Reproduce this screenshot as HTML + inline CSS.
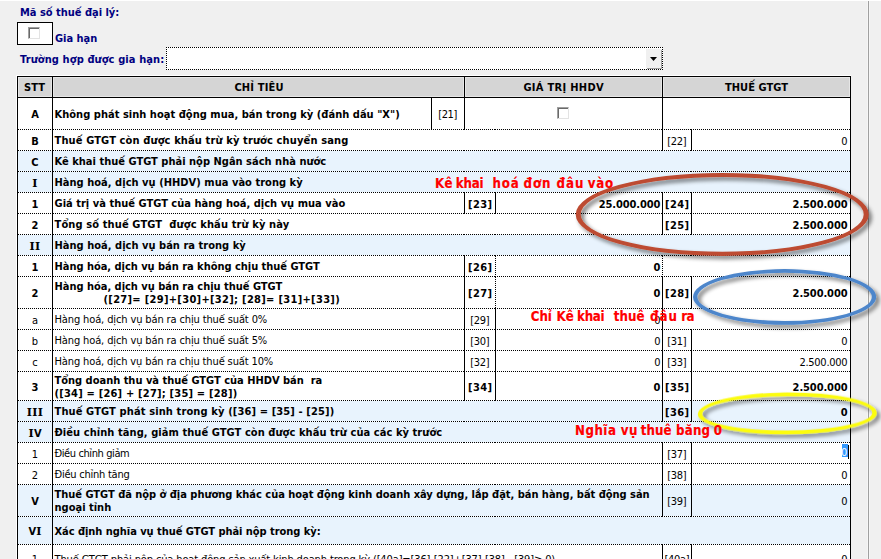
<!DOCTYPE html>
<html lang="vi">
<head>
<meta charset="utf-8">
<title>Tờ khai thuế GTGT</title>
<style>
html,body{margin:0;padding:0}
body{width:881px;height:559px;overflow:hidden;background:#f0f0f0;position:relative;font-family:"DejaVu Sans Condensed","DejaVu Sans","Liberation Sans",sans-serif;font-stretch:condensed;font-size:11px;color:#000}
.r{position:absolute}
.t{position:absolute;white-space:nowrap;line-height:13px}
.b{font-weight:bold}
.nv{color:#000080}
.red{position:absolute;left:0;width:881px;height:16px;white-space:nowrap;color:#ff0000;font-weight:bold;font-size:13.2px;line-height:16px;-webkit-text-stroke:0.15px #ff0000}
.red span{position:absolute;top:0}
.hl{position:absolute;height:1px;background:repeating-linear-gradient(90deg,#000 0,#000 1px,transparent 1px,transparent 2px)}
.vl{position:absolute;width:1px;background:#000}
.vd{position:absolute;width:1px;background:repeating-linear-gradient(180deg,#000 0,#000 1px,transparent 1px,transparent 2px)}
.cb{position:absolute;width:10px;height:10px;background:#fff;border-top:1px solid #a0a0a0;border-left:1px solid #a0a0a0;border-right:1px solid #e3e3e3;border-bottom:1px solid #e3e3e3;box-shadow:inset 1px 1px 0 #696969}
.m{font-family:"DejaVu Serif","Liberation Serif",serif;font-stretch:normal;letter-spacing:0.3px}
svg{position:absolute;left:0;top:0}
</style>
</head>
<body>

<div class="r" style="left:0px;top:0px;width:881px;height:1px;background:#fff;"></div>
<div class="r" style="left:867px;top:1px;width:3px;height:558px;background:#f6f6f6;"></div>
<div class="r" style="left:868px;top:1px;width:1px;height:558px;background:#a0a0a0;"></div>
<div class="t b nv" style="letter-spacing:-0.017px;left:20px;top:6px">Mã số thuế đại lý:</div>
<div class="r" style="left:17px;top:22px;width:36px;height:23px;background:#fff;box-sizing:border-box;border:1px solid #000"></div>
<div class="cb" style="left:28px;top:27px"></div>
<div class="t b nv" style="letter-spacing:-0.034px;left:55px;top:32px">Gia hạn</div>
<div class="t b nv" style="letter-spacing:0.105px;left:20px;top:53px">Trường hợp được gia hạn:</div>
<div class="r" style="left:166px;top:47px;width:497px;height:23px;background:#fff;"></div>
<div class="hl" style="left:166px;top:47px;width:497px"></div>
<div class="hl" style="left:166px;top:69px;width:497px"></div>
<div class="vd" style="left:166px;top:47px;height:23px"></div>
<div class="vd" style="left:662px;top:47px;height:23px"></div>
<div class="r" style="left:646px;top:49px;width:15px;height:19px;background:#f0f0f0;box-shadow:1px 1px 0 #a0a0a0"></div>
<svg width="881" height="559" style="pointer-events:none"><polygon points="650,57 657,57 653.5,61" fill="#000"/></svg>
<div class="r" style="left:16px;top:75px;width:835px;height:484px;background:#fff;"></div>
<div class="r" style="left:17px;top:76px;width:834px;height:483px;background:#000;"></div>
<div class="r" style="left:18px;top:77px;width:832px;height:482px;background:#fff;"></div>
<div class="r" style="left:18px;top:77px;width:832px;height:20px;background:#d5d5d5;"></div>
<div class="r" style="left:18px;top:77px;width:34px;height:20px;background:#d5d5d5;box-shadow:inset 0 0 0 1px #e6e6e6"></div>
<div class="r" style="left:53px;top:77px;width:411px;height:20px;background:#d5d5d5;box-shadow:inset 0 0 0 1px #e6e6e6"></div>
<div class="r" style="left:465px;top:77px;width:197px;height:20px;background:#d5d5d5;box-shadow:inset 0 0 0 1px #e6e6e6"></div>
<div class="r" style="left:663px;top:77px;width:187px;height:20px;background:#d5d5d5;box-shadow:inset 0 0 0 1px #e6e6e6"></div>
<div class="r" style="left:18px;top:97px;width:832px;height:1px;background:#000;"></div>
<div class="vl" style="left:464px;top:77px;height:20px"></div>
<div class="vl" style="left:662px;top:77px;height:20px"></div>
<div class="t b" style="letter-spacing:0.155px;left:34.58px;transform:translateX(-50%);top:81px">STT</div>
<div class="t b" style="letter-spacing:0.185px;left:259.09px;transform:translateX(-50%);top:81px">CHỈ TIÊU</div>
<div class="t b" style="letter-spacing:0.305px;left:563.65px;transform:translateX(-50%);top:81px">GIÁ TRỊ HHDV</div>
<div class="t b" style="letter-spacing:0.070px;left:756.53px;transform:translateX(-50%);top:81px">THUẾ GTGT</div>
<div class="t b" style="letter-spacing:0.070px;left:35.03px;transform:translateX(-50%);top:108px">A</div>
<div class="t b" style="letter-spacing:0.029px;left:54.5px;top:108px">Không phát sinh hoạt động mua, bán trong kỳ (đánh dấu "X")</div>
<div class="vl" style="left:431px;top:98px;height:31px"></div>
<div class="vl" style="left:464px;top:98px;height:31px"></div>
<div class="vl" style="left:662px;top:98px;height:31px"></div>
<div class="t" style="letter-spacing:-0.343px;left:447.63px;transform:translateX(-50%);top:108px">[21]</div>
<div class="cb" style="left:557px;top:107px"></div>
<div class="hl" style="left:18px;top:129px;width:34px"></div>
<div class="hl" style="left:53px;top:129px;width:411px"></div>
<div class="hl" style="left:464px;top:129px;width:31px"></div>
<div class="hl" style="left:495px;top:129px;width:167px"></div>
<div class="hl" style="left:662px;top:129px;width:29px"></div>
<div class="hl" style="left:691px;top:129px;width:159px"></div>
<div class="t b" style="letter-spacing:0.070px;left:35.03px;transform:translateX(-50%);top:135px">B</div>
<div class="t b" style="letter-spacing:0.129px;left:54.5px;top:134px">Thuế GTGT còn được khấu trừ kỳ trước chuyển sang</div>
<div class="vl" style="left:662px;top:130px;height:20px"></div>
<div class="vl" style="left:691px;top:130px;height:20px"></div>
<div class="t" style="letter-spacing:-0.343px;left:676.83px;transform:translateX(-50%);top:135px">[22]</div>
<div class="t" style="letter-spacing:-0.343px;right:33.74px;top:135px">0</div>
<div class="hl" style="left:18px;top:150px;width:34px"></div>
<div class="hl" style="left:53px;top:150px;width:411px"></div>
<div class="hl" style="left:464px;top:150px;width:31px"></div>
<div class="hl" style="left:495px;top:150px;width:167px"></div>
<div class="hl" style="left:662px;top:150px;width:29px"></div>
<div class="hl" style="left:691px;top:150px;width:159px"></div>
<div class="r" style="left:18px;top:151px;width:832px;height:20px;background:#e8f3fd;"></div>
<div class="t b" style="letter-spacing:0.070px;left:35.03px;transform:translateX(-50%);top:156px">C</div>
<div class="t b" style="letter-spacing:0.016px;left:54.5px;top:155px">Kê khai thuế GTGT phải nộp Ngân sách nhà nước</div>
<div class="hl" style="left:18px;top:171px;width:34px"></div>
<div class="hl" style="left:53px;top:171px;width:411px"></div>
<div class="hl" style="left:464px;top:171px;width:31px"></div>
<div class="hl" style="left:495px;top:171px;width:167px"></div>
<div class="hl" style="left:662px;top:171px;width:29px"></div>
<div class="hl" style="left:691px;top:171px;width:159px"></div>
<div class="r" style="left:18px;top:172px;width:832px;height:20px;background:#e8f3fd;"></div>
<div class="t b" style="letter-spacing:0.070px;left:35.03px;transform:translateX(-50%);top:177px"><span class="m">I</span></div>
<div class="t b" style="letter-spacing:0.034px;left:54.5px;top:176px">Hàng hoá, dịch vụ (HHDV) mua vào trong kỳ</div>
<div class="hl" style="left:18px;top:192px;width:34px"></div>
<div class="hl" style="left:53px;top:192px;width:411px"></div>
<div class="hl" style="left:464px;top:192px;width:31px"></div>
<div class="hl" style="left:495px;top:192px;width:167px"></div>
<div class="hl" style="left:662px;top:192px;width:29px"></div>
<div class="hl" style="left:691px;top:192px;width:159px"></div>
<div class="t b" style="letter-spacing:0.070px;left:35.03px;transform:translateX(-50%);top:198px">1</div>
<div class="t b" style="letter-spacing:0.021px;left:54.5px;top:197px">Giá trị và thuế GTGT của hàng hoá, dịch vụ mua vào</div>
<div class="vl" style="left:464px;top:193px;height:20px"></div>
<div class="vl" style="left:495px;top:193px;height:20px"></div>
<div class="t b" style="letter-spacing:0.374px;left:480.19px;transform:translateX(-50%);top:198px">[23]</div>
<div class="t b" style="letter-spacing:-0.090px;right:220.59px;top:198px">25.000.000</div>
<div class="vl" style="left:662px;top:193px;height:20px"></div>
<div class="vl" style="left:662px;top:193px;height:20px"></div>
<div class="vl" style="left:691px;top:193px;height:20px"></div>
<div class="t b" style="letter-spacing:0.374px;left:677.19px;transform:translateX(-50%);top:198px">[24]</div>
<div class="t b" style="letter-spacing:-0.092px;right:33.49px;top:198px">2.500.000</div>
<div class="hl" style="left:18px;top:213px;width:34px"></div>
<div class="hl" style="left:53px;top:213px;width:411px"></div>
<div class="hl" style="left:464px;top:213px;width:31px"></div>
<div class="hl" style="left:495px;top:213px;width:167px"></div>
<div class="hl" style="left:662px;top:213px;width:29px"></div>
<div class="hl" style="left:691px;top:213px;width:159px"></div>
<div class="t b" style="letter-spacing:0.070px;left:35.03px;transform:translateX(-50%);top:219px">2</div>
<div class="t b" style="letter-spacing:0.125px;left:54.5px;top:218px">Tổng số thuế GTGT&nbsp; được khấu trừ kỳ này</div>
<div class="vl" style="left:662px;top:214px;height:20px"></div>
<div class="vl" style="left:691px;top:214px;height:20px"></div>
<div class="t b" style="letter-spacing:0.374px;left:677.19px;transform:translateX(-50%);top:219px">[25]</div>
<div class="t b" style="letter-spacing:-0.092px;right:33.49px;top:219px">2.500.000</div>
<div class="hl" style="left:18px;top:234px;width:34px"></div>
<div class="hl" style="left:53px;top:234px;width:411px"></div>
<div class="hl" style="left:464px;top:234px;width:31px"></div>
<div class="hl" style="left:495px;top:234px;width:167px"></div>
<div class="hl" style="left:662px;top:234px;width:29px"></div>
<div class="hl" style="left:691px;top:234px;width:159px"></div>
<div class="r" style="left:18px;top:235px;width:832px;height:20px;background:#e8f3fd;"></div>
<div class="t b" style="letter-spacing:0.070px;left:35.03px;transform:translateX(-50%);top:240px"><span class="m">II</span></div>
<div class="t b" style="letter-spacing:0.028px;left:54.5px;top:239px">Hàng hoá, dịch vụ bán ra trong kỳ</div>
<div class="hl" style="left:18px;top:255px;width:34px"></div>
<div class="hl" style="left:53px;top:255px;width:411px"></div>
<div class="hl" style="left:464px;top:255px;width:31px"></div>
<div class="hl" style="left:495px;top:255px;width:167px"></div>
<div class="hl" style="left:662px;top:255px;width:29px"></div>
<div class="hl" style="left:691px;top:255px;width:159px"></div>
<div class="t b" style="letter-spacing:0.070px;left:35.03px;transform:translateX(-50%);top:261px">1</div>
<div class="t b" style="letter-spacing:-0.028px;left:54.5px;top:260px">Hàng hóa, dịch vụ bán ra không chịu thuế GTGT</div>
<div class="vl" style="left:464px;top:256px;height:20px"></div>
<div class="vd" style="left:495px;top:256px;height:20px"></div>
<div class="t b" style="letter-spacing:0.374px;left:480.19px;transform:translateX(-50%);top:261px">[26]</div>
<div class="t b" style="letter-spacing:0.070px;right:220.43px;top:261px">0</div>
<div class="vd" style="left:662px;top:256px;height:20px"></div>
<div class="hl" style="left:18px;top:276px;width:34px"></div>
<div class="hl" style="left:53px;top:276px;width:411px"></div>
<div class="hl" style="left:464px;top:276px;width:31px"></div>
<div class="hl" style="left:495px;top:276px;width:167px"></div>
<div class="hl" style="left:662px;top:276px;width:29px"></div>
<div class="hl" style="left:691px;top:276px;width:159px"></div>
<div class="t b" style="letter-spacing:0.070px;left:35.03px;transform:translateX(-50%);top:287px">2</div>
<div class="t b" style="letter-spacing:-0.019px;left:54.5px;top:280px">Hàng hóa, dịch vụ bán ra chịu thuế GTGT</div>
<div class="t b" style="letter-spacing:0.307px;left:103.5px;top:293px">([27]= [29]+[30]+[32]; [28]= [31]+[33])</div>
<div class="vl" style="left:464px;top:277px;height:31px"></div>
<div class="vd" style="left:495px;top:277px;height:31px"></div>
<div class="t b" style="letter-spacing:0.374px;left:480.19px;transform:translateX(-50%);top:287px">[27]</div>
<div class="t b" style="letter-spacing:0.070px;right:220.43px;top:287px">0</div>
<div class="vl" style="left:662px;top:277px;height:31px"></div>
<div class="vl" style="left:662px;top:277px;height:31px"></div>
<div class="vl" style="left:691px;top:277px;height:31px"></div>
<div class="t b" style="letter-spacing:0.374px;left:677.19px;transform:translateX(-50%);top:287px">[28]</div>
<div class="t b" style="letter-spacing:-0.092px;right:33.49px;top:287px">2.500.000</div>
<div class="hl" style="left:18px;top:308px;width:34px"></div>
<div class="hl" style="left:53px;top:308px;width:411px"></div>
<div class="hl" style="left:464px;top:308px;width:31px"></div>
<div class="hl" style="left:495px;top:308px;width:167px"></div>
<div class="hl" style="left:662px;top:308px;width:29px"></div>
<div class="hl" style="left:691px;top:308px;width:159px"></div>
<div class="t" style="letter-spacing:-0.343px;left:34.83px;transform:translateX(-50%);top:314px">a</div>
<div class="t" style="letter-spacing:-0.125px;left:54.5px;top:313px">Hàng hoá, dịch vụ bán ra chịu thuế suất 0%</div>
<div class="vl" style="left:464px;top:309px;height:20px"></div>
<div class="vl" style="left:495px;top:309px;height:20px"></div>
<div class="t" style="letter-spacing:-0.343px;left:479.83px;transform:translateX(-50%);top:314px">[29]</div>
<div class="t" style="letter-spacing:-0.343px;right:220.84px;top:314px">0</div>
<div class="vl" style="left:662px;top:309px;height:20px"></div>
<div class="hl" style="left:18px;top:329px;width:34px"></div>
<div class="hl" style="left:53px;top:329px;width:411px"></div>
<div class="hl" style="left:464px;top:329px;width:31px"></div>
<div class="hl" style="left:495px;top:329px;width:167px"></div>
<div class="hl" style="left:662px;top:329px;width:29px"></div>
<div class="hl" style="left:691px;top:329px;width:159px"></div>
<div class="t" style="letter-spacing:-0.343px;left:34.83px;transform:translateX(-50%);top:335px">b</div>
<div class="t" style="letter-spacing:-0.125px;left:54.5px;top:334px">Hàng hoá, dịch vụ bán ra chịu thuế suất 5%</div>
<div class="vl" style="left:464px;top:330px;height:20px"></div>
<div class="vl" style="left:495px;top:330px;height:20px"></div>
<div class="t" style="letter-spacing:-0.343px;left:479.83px;transform:translateX(-50%);top:335px">[30]</div>
<div class="t" style="letter-spacing:-0.343px;right:220.84px;top:335px">0</div>
<div class="vl" style="left:662px;top:330px;height:20px"></div>
<div class="vl" style="left:662px;top:330px;height:20px"></div>
<div class="vl" style="left:691px;top:330px;height:20px"></div>
<div class="t" style="letter-spacing:-0.343px;left:676.83px;transform:translateX(-50%);top:335px">[31]</div>
<div class="t" style="letter-spacing:-0.343px;right:33.74px;top:335px">0</div>
<div class="hl" style="left:18px;top:350px;width:34px"></div>
<div class="hl" style="left:53px;top:350px;width:411px"></div>
<div class="hl" style="left:464px;top:350px;width:31px"></div>
<div class="hl" style="left:495px;top:350px;width:167px"></div>
<div class="hl" style="left:662px;top:350px;width:29px"></div>
<div class="hl" style="left:691px;top:350px;width:159px"></div>
<div class="t" style="letter-spacing:-0.343px;left:34.83px;transform:translateX(-50%);top:356px">c</div>
<div class="t" style="letter-spacing:-0.129px;left:54.5px;top:355px">Hàng hoá, dịch vụ bán ra chịu thuế suất 10%</div>
<div class="vl" style="left:464px;top:351px;height:20px"></div>
<div class="vl" style="left:495px;top:351px;height:20px"></div>
<div class="t" style="letter-spacing:-0.343px;left:479.83px;transform:translateX(-50%);top:356px">[32]</div>
<div class="t" style="letter-spacing:-0.343px;right:220.84px;top:356px">0</div>
<div class="vl" style="left:662px;top:351px;height:20px"></div>
<div class="vl" style="left:662px;top:351px;height:20px"></div>
<div class="vl" style="left:691px;top:351px;height:20px"></div>
<div class="t" style="letter-spacing:-0.343px;left:676.83px;transform:translateX(-50%);top:356px">[33]</div>
<div class="t" style="letter-spacing:-0.270px;right:33.67px;top:356px">2.500.000</div>
<div class="hl" style="left:18px;top:371px;width:34px"></div>
<div class="hl" style="left:53px;top:371px;width:411px"></div>
<div class="hl" style="left:464px;top:371px;width:31px"></div>
<div class="hl" style="left:495px;top:371px;width:167px"></div>
<div class="hl" style="left:662px;top:371px;width:29px"></div>
<div class="hl" style="left:691px;top:371px;width:159px"></div>
<div class="t b" style="letter-spacing:0.070px;left:35.03px;transform:translateX(-50%);top:381px">3</div>
<div class="t b" style="letter-spacing:-0.007px;left:54.5px;top:374px">Tổng doanh thu và thuế GTGT của HHDV bán&nbsp; ra</div>
<div class="t b" style="letter-spacing:0.207px;left:54.5px;top:387px">([34] = [26] + [27]; [35] = [28])</div>
<div class="vl" style="left:464px;top:372px;height:28px"></div>
<div class="vl" style="left:495px;top:372px;height:28px"></div>
<div class="t b" style="letter-spacing:0.374px;left:480.19px;transform:translateX(-50%);top:381px">[34]</div>
<div class="t b" style="letter-spacing:0.070px;right:220.43px;top:381px">0</div>
<div class="vl" style="left:662px;top:372px;height:28px"></div>
<div class="vl" style="left:662px;top:372px;height:28px"></div>
<div class="vl" style="left:691px;top:372px;height:28px"></div>
<div class="t b" style="letter-spacing:0.374px;left:677.19px;transform:translateX(-50%);top:381px">[35]</div>
<div class="t b" style="letter-spacing:-0.092px;right:33.49px;top:381px">2.500.000</div>
<div class="hl" style="left:18px;top:400px;width:34px"></div>
<div class="hl" style="left:53px;top:400px;width:411px"></div>
<div class="hl" style="left:464px;top:400px;width:31px"></div>
<div class="hl" style="left:495px;top:400px;width:167px"></div>
<div class="hl" style="left:662px;top:400px;width:29px"></div>
<div class="hl" style="left:691px;top:400px;width:159px"></div>
<div class="r" style="left:18px;top:401px;width:832px;height:20px;background:#e8f3fd;"></div>
<div class="t b" style="letter-spacing:0.070px;left:35.03px;transform:translateX(-50%);top:406px"><span class="m">III</span></div>
<div class="t b" style="letter-spacing:0.124px;left:54.5px;top:405px">Thuế GTGT phát sinh trong kỳ ([36] = [35] - [25])</div>
<div class="vl" style="left:662px;top:401px;height:20px"></div>
<div class="vl" style="left:691px;top:401px;height:20px"></div>
<div class="t b" style="letter-spacing:0.374px;left:677.19px;transform:translateX(-50%);top:406px">[36]</div>
<div class="t b" style="letter-spacing:0.070px;right:33.33px;top:406px">0</div>
<div class="hl" style="left:18px;top:421px;width:34px"></div>
<div class="hl" style="left:53px;top:421px;width:411px"></div>
<div class="hl" style="left:464px;top:421px;width:31px"></div>
<div class="hl" style="left:495px;top:421px;width:167px"></div>
<div class="hl" style="left:662px;top:421px;width:29px"></div>
<div class="hl" style="left:691px;top:421px;width:159px"></div>
<div class="r" style="left:18px;top:422px;width:832px;height:20px;background:#e8f3fd;"></div>
<div class="t b" style="letter-spacing:0.070px;left:35.03px;transform:translateX(-50%);top:427px"><span class="m">I</span>V</div>
<div class="t b" style="letter-spacing:0.070px;left:54.5px;top:426px">Điều chỉnh tăng, giảm thuế GTGT còn được khấu trừ của các kỳ trước</div>
<div class="hl" style="left:18px;top:442px;width:34px"></div>
<div class="hl" style="left:53px;top:442px;width:411px"></div>
<div class="hl" style="left:464px;top:442px;width:31px"></div>
<div class="hl" style="left:495px;top:442px;width:167px"></div>
<div class="hl" style="left:662px;top:442px;width:29px"></div>
<div class="hl" style="left:691px;top:442px;width:159px"></div>
<div class="t" style="letter-spacing:-0.343px;left:34.83px;transform:translateX(-50%);top:448px">1</div>
<div class="t" style="letter-spacing:-0.402px;left:54.5px;top:447px">Điều chỉnh giảm</div>
<div class="vl" style="left:662px;top:443px;height:20px"></div>
<div class="vl" style="left:691px;top:443px;height:20px"></div>
<div class="t" style="letter-spacing:-0.343px;left:676.83px;transform:translateX(-50%);top:448px">[37]</div>
<div class="r" style="left:842px;top:444px;width:6px;height:13px;background:#3399ff;"></div>
<div class="r" style="left:848px;top:445px;width:1px;height:14px;background:#000;"></div>
<div class="t" style="letter-spacing:-0.343px;color:#fff;right:33.94px;top:446px">0</div>
<div class="hl" style="left:18px;top:463px;width:34px"></div>
<div class="hl" style="left:53px;top:463px;width:411px"></div>
<div class="hl" style="left:464px;top:463px;width:31px"></div>
<div class="hl" style="left:495px;top:463px;width:167px"></div>
<div class="hl" style="left:662px;top:463px;width:29px"></div>
<div class="hl" style="left:691px;top:463px;width:159px"></div>
<div class="t" style="letter-spacing:-0.343px;left:34.83px;transform:translateX(-50%);top:469px">2</div>
<div class="t" style="letter-spacing:-0.242px;left:54.5px;top:468px">Điều chỉnh tăng</div>
<div class="vl" style="left:662px;top:464px;height:20px"></div>
<div class="vl" style="left:691px;top:464px;height:20px"></div>
<div class="t" style="letter-spacing:-0.343px;left:676.83px;transform:translateX(-50%);top:469px">[38]</div>
<div class="t" style="letter-spacing:-0.343px;right:33.74px;top:469px">0</div>
<div class="hl" style="left:18px;top:484px;width:34px"></div>
<div class="hl" style="left:53px;top:484px;width:411px"></div>
<div class="hl" style="left:464px;top:484px;width:31px"></div>
<div class="hl" style="left:495px;top:484px;width:167px"></div>
<div class="hl" style="left:662px;top:484px;width:29px"></div>
<div class="hl" style="left:691px;top:484px;width:159px"></div>
<div class="r" style="left:18px;top:485px;width:832px;height:31px;background:#e8f3fd;"></div>
<div class="t b" style="letter-spacing:0.070px;left:35.03px;transform:translateX(-50%);top:495px">V</div>
<div class="t b" style="letter-spacing:-0.017px;left:54.5px;top:488px">Thuế GTGT đã nộp ở địa phương khác của hoạt động kinh doanh xây dựng, lắp đặt, bán hàng, bất động sản</div>
<div class="t b" style="letter-spacing:0.005px;left:54.5px;top:501px">ngoại tỉnh</div>
<div class="vl" style="left:662px;top:485px;height:31px"></div>
<div class="vl" style="left:691px;top:485px;height:31px"></div>
<div class="t" style="letter-spacing:-0.343px;left:676.83px;transform:translateX(-50%);top:495px">[39]</div>
<div class="t" style="letter-spacing:-0.343px;right:33.74px;top:495px">0</div>
<div class="hl" style="left:18px;top:516px;width:34px"></div>
<div class="hl" style="left:53px;top:516px;width:411px"></div>
<div class="hl" style="left:464px;top:516px;width:31px"></div>
<div class="hl" style="left:495px;top:516px;width:167px"></div>
<div class="hl" style="left:662px;top:516px;width:29px"></div>
<div class="hl" style="left:691px;top:516px;width:159px"></div>
<div class="r" style="left:18px;top:517px;width:832px;height:27px;background:#e8f3fd;"></div>
<div class="t b" style="letter-spacing:0.070px;left:35.03px;transform:translateX(-50%);top:525px">V<span class="m">I</span></div>
<div class="t b" style="letter-spacing:-0.041px;left:54.5px;top:525px">Xác định nghĩa vụ thuế GTGT phải nộp trong kỳ:</div>
<div class="hl" style="left:18px;top:544px;width:34px"></div>
<div class="hl" style="left:53px;top:544px;width:411px"></div>
<div class="hl" style="left:464px;top:544px;width:31px"></div>
<div class="hl" style="left:495px;top:544px;width:167px"></div>
<div class="hl" style="left:662px;top:544px;width:29px"></div>
<div class="hl" style="left:691px;top:544px;width:159px"></div>
<div class="t" style="letter-spacing:-0.343px;left:34.83px;transform:translateX(-50%);top:553px">1</div>
<div class="t" style="letter-spacing:-0.131px;left:54.5px;top:553px">Thuế GTGT phải nộp của hoạt động sản xuất kinh doanh trong kỳ ([40a]=[36]-[22]+[37]-[38] - [39]≥ 0)</div>
<div class="vl" style="left:662px;top:545px;height:27px"></div>
<div class="vl" style="left:691px;top:545px;height:27px"></div>
<div class="t" style="letter-spacing:-0.343px;left:676.83px;transform:translateX(-50%);top:553px">[40a]</div>
<div class="t" style="letter-spacing:-0.343px;right:33.74px;top:553px">0</div>
<div class="hl" style="left:18px;top:572px;width:34px"></div>
<div class="hl" style="left:53px;top:572px;width:411px"></div>
<div class="hl" style="left:464px;top:572px;width:31px"></div>
<div class="hl" style="left:495px;top:572px;width:167px"></div>
<div class="hl" style="left:662px;top:572px;width:29px"></div>
<div class="hl" style="left:691px;top:572px;width:159px"></div>
<div class="vl" style="left:52px;top:77px;height:482px"></div>
<svg width="881" height="559" viewBox="0 0 881 559">
<defs><filter id="sh" x="-10%" y="-25%" width="120%" height="160%"><feGaussianBlur in="SourceAlpha" stdDeviation="2.3"/><feOffset dx="2.6" dy="3.4" result="o"/><feComponentTransfer><feFuncA type="linear" slope="0.55"/></feComponentTransfer><feMerge><feMergeNode/><feMergeNode in="SourceGraphic"/></feMerge></filter></defs>
<path d="M575.70 214.40a146.50 41.50 0 1 0 293.00 0a146.50 41.50 0 1 0 -293.00 0zM580.70 214.40a141.50 37.40 0 1 0 283.00 0a141.50 37.40 0 1 0 -283.00 0z" fill="#bd4b31" fill-rule="evenodd" filter="url(#sh)"/>
<path d="M693.00 296.90a91.60 27.80 0 1 0 183.20 0a91.60 27.80 0 1 0 -183.20 0zM697.40 296.90a87.20 24.10 0 1 0 174.40 0a87.20 24.10 0 1 0 -174.40 0z" fill="#4d86cb" fill-rule="evenodd" filter="url(#sh)"/>
<path d="M697.80 413.40a89.50 20.90 0 1 0 179.00 0a89.50 20.90 0 1 0 -179.00 0zM702.30 413.40a85.00 17.10 0 1 0 170.00 0a85.00 17.10 0 1 0 -170.00 0z" fill="#fcfc10" fill-rule="evenodd" filter="url(#sh)" transform="rotate(-0.4 787.3 413.4)"/>
</svg>
<div class="red" style="top:176px"><span style="left:435.1px;letter-spacing:0.384px">Kê</span> <span style="left:455.8px;letter-spacing:-0.235px">khai</span> <span style="left:492.4px;letter-spacing:0.845px">hoá</span> <span style="left:523.4px;letter-spacing:1.0px">đơn</span> <span style="left:556.4px;letter-spacing:1.0px">đâu</span> <span style="left:587.7px;letter-spacing:0.755px">vào</span></div>
<div class="red" style="top:309px"><span style="left:530.8px;letter-spacing:-0.109px">Chỉ</span> <span style="left:556.6px;letter-spacing:0.184px">Kê</span> <span style="left:577.1px;letter-spacing:-0.302px">khai</span> <span style="left:613.7px;letter-spacing:0.058px">thuê</span> <span style="left:650.1px;letter-spacing:1.0px">đâu</span> <span style="left:681.2px;letter-spacing:-0.559px">ra</span></div>
<div class="red" style="top:423px"><span style="left:575.1px;letter-spacing:0.462px">Nghĩa</span> <span style="left:620.8px;letter-spacing:0.513px">vụ</span> <span style="left:640.8px;letter-spacing:0.025px">thuê</span> <span style="left:675.9px;letter-spacing:0.249px">băng</span> <span style="left:713.7px;letter-spacing:0px">0</span></div>
</body>
</html>
